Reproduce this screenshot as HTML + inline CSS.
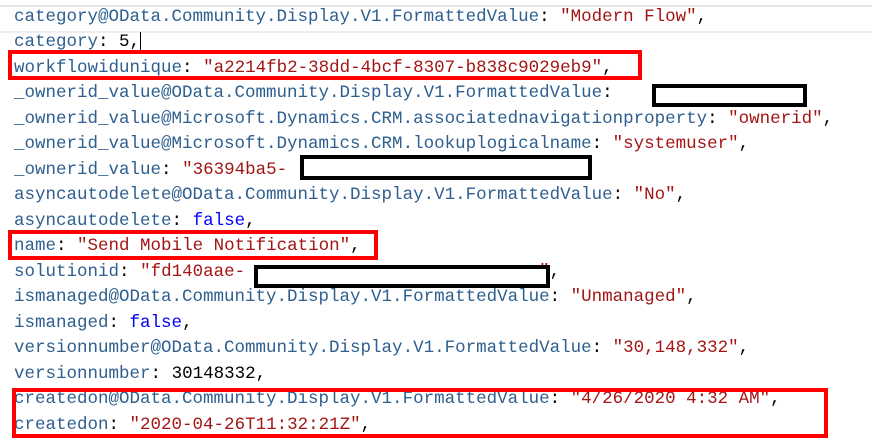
<!DOCTYPE html>
<html><head><meta charset="utf-8"><style>
body{margin:0;width:872px;height:441px;background:#fff;overflow:hidden;position:relative;font-family:"Liberation Mono",monospace;font-size:17.5px}
.l{position:absolute;left:14px;white-space:pre;line-height:25px;color:#2e5f8f}
.s{color:#a31515}.n{color:#000}.p{color:#000}
.r{position:absolute;border:4px solid #f00;box-sizing:border-box}
.b{position:absolute;border:4px solid #000;background:#fff;box-sizing:border-box}
</style></head><body>
<div style="position:absolute;left:0;top:5px;width:872px;height:28px;border-top:2px solid #e6e6ea;border-bottom:2px solid #eeeef0;box-sizing:border-box"></div>
<div class="l" style="top:5px">category@OData.Community.Display.V1.FormattedValue<span class="p">:</span> <span class="s">"Modern Flow"</span><span class="p">,</span></div>
<div class="l" style="top:30px">category<span class="p">:</span> <span class="n">5,</span><span style="border-left:1px solid #000">&#8203;</span></div>
<div class="l" style="top:56px">workflowidunique<span class="p">:</span> <span class="s">"a2214fb2-38dd-4bcf-8307-b838c9029eb9"</span><span class="p">,</span></div>
<div class="l" style="top:81px">_ownerid_value@OData.Community.Display.V1.FormattedValue<span class="p">:</span>                <span class="p">,</span></div>
<div class="l" style="top:107px">_ownerid_value@Microsoft.Dynamics.CRM.associatednavigationproperty<span class="p">:</span> <span class="s">"ownerid"</span><span class="p">,</span></div>
<div class="l" style="top:132px">_ownerid_value@Microsoft.Dynamics.CRM.lookuplogicalname<span class="p">:</span> <span class="s">"systemuser"</span><span class="p">,</span></div>
<div class="l" style="top:158px">_ownerid_value<span class="p">:</span> <span class="s">"36394ba5-                           "</span><span class="p">,</span></div>
<div class="l" style="top:183px">asyncautodelete@OData.Community.Display.V1.FormattedValue<span class="p">:</span> <span class="s">"No"</span><span class="p">,</span></div>
<div class="l" style="top:209px">asyncautodelete<span class="p">:</span> <span style="color:#0000ff">false</span><span class="p">,</span></div>
<div class="l" style="top:234px">name<span class="p">:</span> <span class="s">"Send Mobile Notification"</span><span class="p">,</span></div>
<div class="l" style="top:260px">solutionid<span class="p">:</span> <span class="s">"fd140aae-                            "</span><span class="p">,</span></div>
<div class="l" style="top:285px">ismanaged@OData.Community.Display.V1.FormattedValue<span class="p">:</span> <span class="s">"Unmanaged"</span><span class="p">,</span></div>
<div class="l" style="top:311px">ismanaged<span class="p">:</span> <span style="color:#0000ff">false</span><span class="p">,</span></div>
<div class="l" style="top:336px">versionnumber@OData.Community.Display.V1.FormattedValue<span class="p">:</span> <span class="s">"30,148,332"</span><span class="p">,</span></div>
<div class="l" style="top:362px">versionnumber<span class="p">:</span> <span class="n">30148332,</span></div>
<div class="l" style="top:387px">createdon@OData.Community.Display.V1.FormattedValue<span class="p">:</span> <span class="s">"4/26/2020 4:32 AM"</span><span class="p">,</span></div>
<div class="l" style="top:413px">createdon<span class="p">:</span> <span class="s">"2020-04-26T11:32:21Z"</span><span class="p">,</span></div>
<div class="r" style="left:8px;top:50px;width:634px;height:30px"></div>
<div class="r" style="left:8px;top:230px;width:370px;height:30px"></div>
<div class="r" style="left:12px;top:388px;width:816px;height:50px"></div>
<div class="b" style="left:652px;top:84px;width:155px;height:23px"></div>
<div class="b" style="left:300px;top:155px;width:292px;height:25px"></div>
<div class="b" style="left:254px;top:265px;width:296px;height:23px"></div>
</body></html>
